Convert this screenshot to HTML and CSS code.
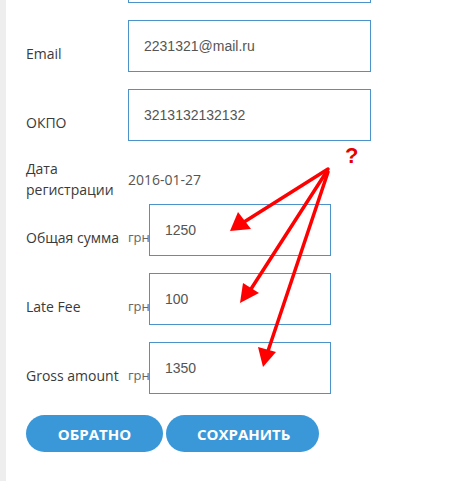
FILE: index.html
```html
<!DOCTYPE html>
<html>
<head>
	<meta charset="utf-8">
	<link rel="stylesheet" href="styles.css">
</head>
<body>
	<div class="page">
		<div class="form">
			<div class="row row-cut">
				<span class="label"></span>
				<input class="field field-wide" type="text" value="">
			</div>
			<div class="row">
				<span class="label">Email</span>
				<input class="field field-wide" type="text" value="2231321@mail.ru">
			</div>
			<div class="row">
				<span class="label">ОКПО</span>
				<input class="field field-wide" type="text" value="3213132132132">
			</div>
			<div class="row row-date">
				<span class="label">Дата регистрации</span>
				<span class="value">2016-01-27</span>
			</div>
			<div class="row">
				<span class="label">Общая сумма</span>
				<span class="unit">грн</span>
				<input class="field field-money" type="text" value="1250">
			</div>
			<div class="row">
				<span class="label">Late Fee</span>
				<span class="unit">грн</span>
				<input class="field field-money" type="text" value="100">
			</div>
			<div class="row row-last">
				<span class="label">Gross amount</span>
				<span class="unit">грн</span>
				<input class="field field-money" type="text" value="1350">
			</div>
			<div class="buttons">
				<button class="btn btn-back">ОБРАТНО</button>
				<button class="btn btn-save">СОХРАНИТЬ</button>
			</div>
		</div>

		<!-- annotation drawn over the form -->
		<svg class="marks" width="470" height="481" viewBox="0 0 470 481">
			<g stroke="#f00" stroke-width="3.5" stroke-linecap="round" fill="none">
				<line x1="328" y1="169" x2="244" y2="222"/>
				<line x1="327" y1="171" x2="251" y2="289"/>
				<line x1="328" y1="172" x2="268" y2="351"/>
			</g>
			<g fill="#f00">
				<polygon points="230,231 238,212 251,229"/>
				<polygon points="240,303 243,283 259,293"/>
				<polygon points="263,367 258,347 276,352"/>
			</g>
			<text class="quest" x="345" y="163">?</text>
		</svg>
	</div>
</body>
</html>
```

FILE: styles.css
```css
html, body {
	margin: 0;
	padding: 0;
	width: 100%;
	height: 100%;
	overflow: hidden;
	background: #fff;
}

.page {
	position: relative;
	display: flow-root;
	height: 100%;
	border-left: 6px solid #eeeeee;
	font-family: "Open Sans", "Noto Sans", sans-serif;
	font-size: 14px;
	color: #333;
}

.form {
	padding-left: 20px;
	margin-top: -49px;
}

.row {
	display: flex;
	align-items: center;
	margin-bottom: 17px;
}

.label {
	width: 102px;
	flex: none;
	padding-top: 14px;
	line-height: 21px;
	color: #3a3a3a;
}

.unit {
	width: 21px;
	flex: none;
	padding-top: 14px;
	line-height: 21px;
	font-size: 13px;
	color: #666;
	white-space: nowrap;
}

.field {
	box-sizing: border-box;
	height: 52px;
	margin: 0;
	padding: 0 15px;
	border: 1px solid #4b93c8;
	border-radius: 0;
	background: #fff;
	font-family: "Liberation Sans", Arial, sans-serif;
	font-size: 14px;
	color: #555;
	outline: none;
}

.field-wide {
	width: 243px;
}

.field-money {
	width: 182px;
}

.row-date {
	margin: 4px 0 4px;
}

.row-date .label {
	padding-top: 0;
}

.value {
	color: #555;
	line-height: 21px;
}

.row-last {
	margin-bottom: 21px;
}

.buttons {
	display: flex;
	gap: 3px;
}

.btn {
	height: 37px;
	padding: 0 31px;
	border: none;
	border-radius: 19px;
	background: #3a98d9;
	color: #fff;
	font-family: "Open Sans", "Noto Sans", sans-serif;
	font-size: 15px;
	font-weight: bold;
	cursor: pointer;
}

.btn-back {
	width: 137px;
}

.btn-save {
	width: 153px;
}

.marks {
	position: absolute;
	top: 0;
	left: -6px;
	pointer-events: none;
}

.quest {
	font-family: "Liberation Sans", Arial, sans-serif;
	font-size: 22px;
	font-weight: bold;
	fill: #e60000;
}
```
